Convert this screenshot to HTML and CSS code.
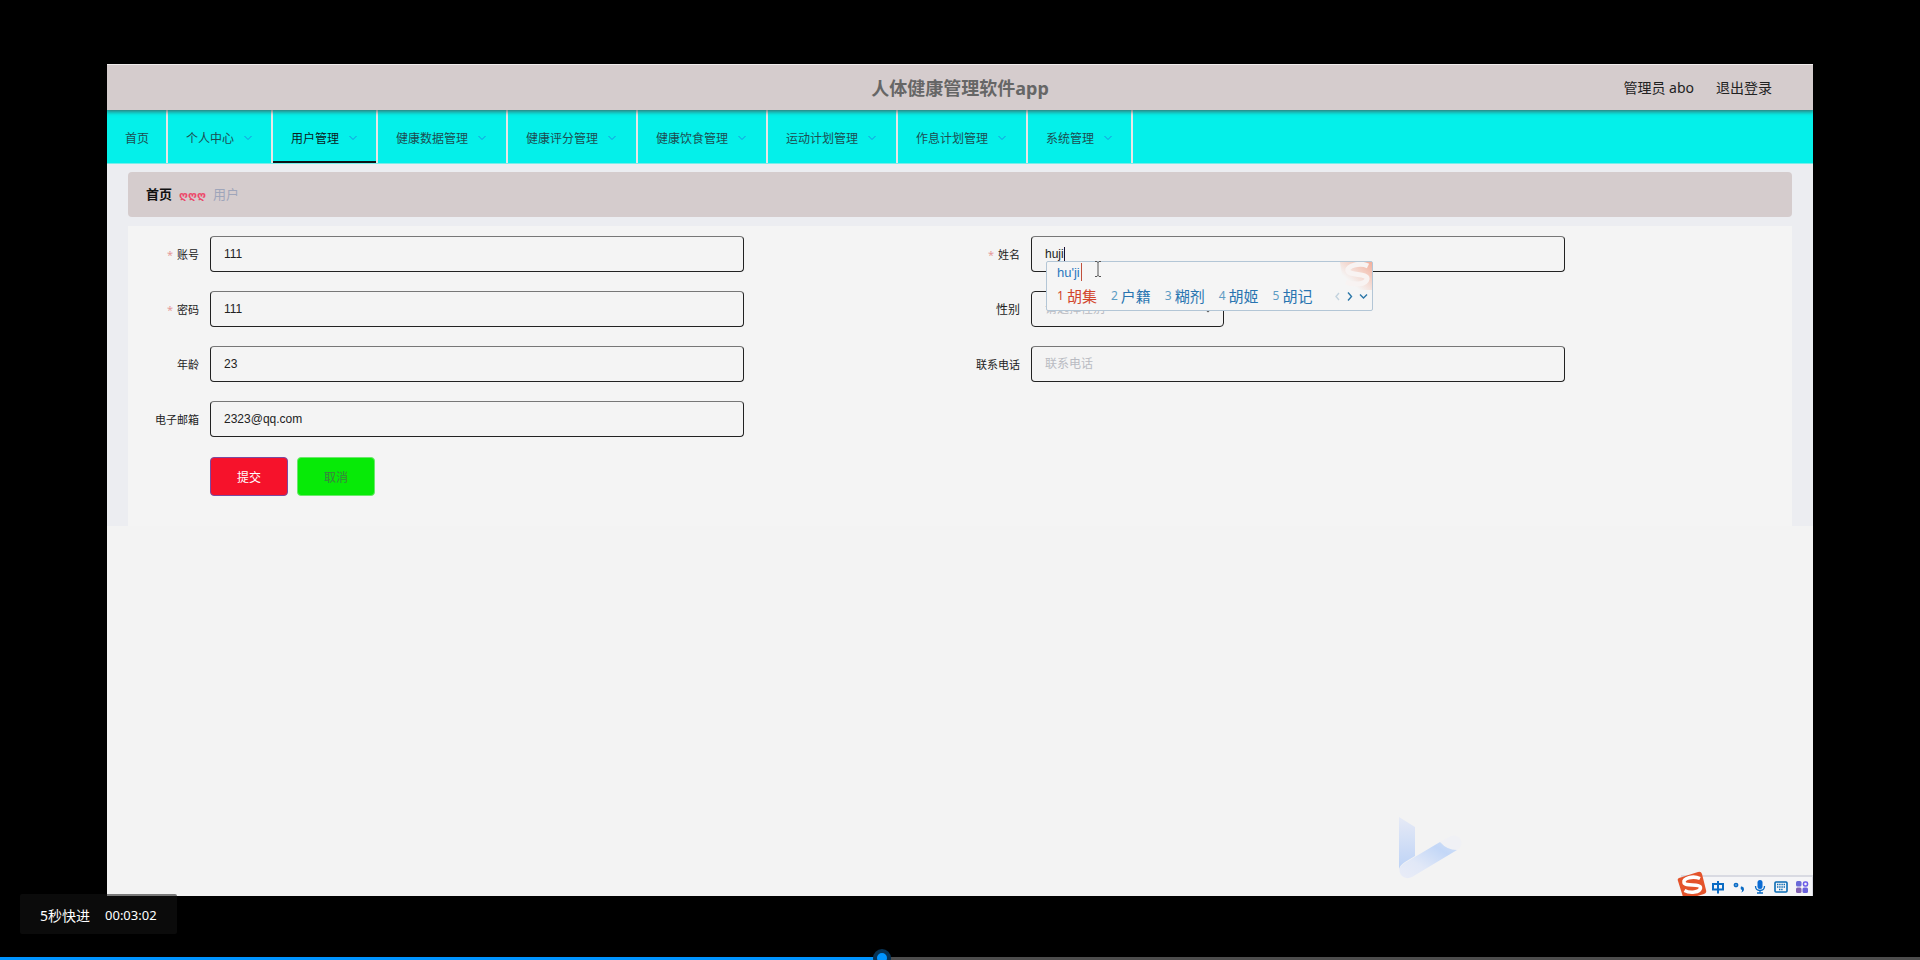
FILE: index.html
```html
<!DOCTYPE html>
<html lang="zh-CN">
<head>
<meta charset="utf-8">
<title>人体健康管理软件app</title>
<link rel="stylesheet" href="styles.css">
</head>
<body>
<div class="player">
  <div class="screen">
    <header class="header">
      <h1 class="title">人体健康管理软件app</h1>
      <div class="account">
        <span>管理员 abo</span>
        <a href="#">退出登录</a>
      </div>
    </header>
    <nav class="nav">
      <a class="nav-item nav-home" href="#">首页</a>
      <a class="nav-item nav-short" href="#">个人中心<svg class="chev" viewBox="0 0 8 6"><path d="M.5 1 4 4.500 7.500 1"/></svg></a>
      <a class="nav-item nav-short active" href="#">用户管理<svg class="chev" viewBox="0 0 8 6"><path d="M.5 1 4 4.500 7.500 1"/></svg></a>
      <a class="nav-item" href="#">健康数据管理<svg class="chev" viewBox="0 0 8 6"><path d="M.5 1 4 4.500 7.500 1"/></svg></a>
      <a class="nav-item" href="#">健康评分管理<svg class="chev" viewBox="0 0 8 6"><path d="M.5 1 4 4.500 7.500 1"/></svg></a>
      <a class="nav-item" href="#">健康饮食管理<svg class="chev" viewBox="0 0 8 6"><path d="M.5 1 4 4.500 7.500 1"/></svg></a>
      <a class="nav-item" href="#">运动计划管理<svg class="chev" viewBox="0 0 8 6"><path d="M.5 1 4 4.500 7.500 1"/></svg></a>
      <a class="nav-item" href="#">作息计划管理<svg class="chev" viewBox="0 0 8 6"><path d="M.5 1 4 4.500 7.500 1"/></svg></a>
      <a class="nav-item nav-short" href="#">系统管理<svg class="chev" viewBox="0 0 8 6"><path d="M.5 1 4 4.500 7.500 1"/></svg></a>
    </nav>
    <main class="content">
      <div class="crumbs">
        <a class="crumb-home" href="#">首页</a>
        <span class="crumb-sep">ღღღ</span>
        <span class="crumb-here">用户</span>
      </div>
      <form class="panel">
        <div class="fields">
          <div class="field">
            <label class="label" for="account"><span class="star">*</span>账号</label>
            <div class="control"><input class="input" id="account" type="text" value="111"></div>
          </div>
          <div class="field">
            <label class="label" for="name"><span class="star">*</span>姓名</label>
            <div class="control">
              <input class="input" id="name" type="text" value="huji">
              <span class="caret"></span>
              <div class="ime">
                <svg class="ime-mark" viewBox="0 0 36 28">
                  <defs><linearGradient id="fade" x1="0" y1="1" x2="1" y2="0"><stop offset=".3" stop-color="#f3b5a2" stop-opacity="0"/><stop offset="1" stop-color="#f2ae9a"/></linearGradient></defs>
                  <path d="M4 0H36V28H8Z" fill="url(#fade)"/>
                  <path d="M32 4C24 0 10 4 12 9C14 14 32 11 31 17C30 23 17 23 10 20" fill="none" stroke="#f8f3f2" stroke-width="5"/>
                </svg>
                <div class="ime-typed">hu'ji</div>
                <div class="ime-row">
                  <span class="cand first"><i>1</i>胡集</span>
                  <span class="cand"><i>2</i>户籍</span>
                  <span class="cand"><i>3</i>糊剂</span>
                  <span class="cand"><i>4</i>胡姬</span>
                  <span class="cand"><i>5</i>胡记</span>
                  <svg class="ime-arrows" viewBox="0 0 34 10"><path d="M5 2 2 5.500 5 9" stroke="#c3d3de"/><path d="M14 1.500 17.500 5.500 14 9.500M26 3.500 29.500 7 33 3.500" stroke="#2c77a8"/></svg>
                </div>
              </div>
              <svg class="ibeam" viewBox="0 0 8 16"><path d="M1 .500H3L4 1.500 5 .500H7M4 1V15M1 15.500H3L4 14.500 5 15.500H7"/></svg>
            </div>
          </div>
          <div class="field">
            <label class="label" for="password"><span class="star">*</span>密码</label>
            <div class="control"><input class="input" id="password" type="text" value="111"></div>
          </div>
          <div class="field">
            <label class="label label-large" for="gender">性别</label>
            <div class="control">
              <div class="select-box">
                <select class="input select" id="gender"><option>请选择性别</option></select>
                <svg class="select-chev" viewBox="0 0 8 6"><path d="M.5 1 4 4.500 7.500 1"/></svg>
              </div>
            </div>
          </div>
          <div class="field">
            <label class="label" for="age">年龄</label>
            <div class="control"><input class="input" id="age" type="text" value="23"></div>
          </div>
          <div class="field">
            <label class="label" for="phone">联系电话</label>
            <div class="control"><input class="input" id="phone" type="text" placeholder="联系电话"></div>
          </div>
          <div class="field">
            <label class="label" for="email">电子邮箱</label>
            <div class="control"><input class="input" id="email" type="text" value="2323@qq.com"></div>
          </div>
        </div>
        <div class="actions">
          <button class="btn submit" type="button">提交</button>
          <button class="btn cancel" type="button">取消</button>
        </div>
      </form>
    </main>
    <svg class="bird" viewBox="0 0 68 70">
      <defs>
        <linearGradient id="wing" x1="0" y1="0" x2="0" y2="1"><stop offset="0" stop-color="#e6eaf6"/><stop offset="1" stop-color="#bcd2f6"/></linearGradient>
        <linearGradient id="body" x1="0" y1="1" x2="1" y2="0"><stop offset="0" stop-color="#e9ecf7"/><stop offset=".35" stop-color="#e1e8f7"/><stop offset=".75" stop-color="#c3d7f7"/><stop offset="1" stop-color="#d0dff7"/></linearGradient>
      </defs>
      <path d="M2 5 18 15V44L8 50Q2 54 2 58Z" fill="url(#wing)"/>
      <path d="M43 30 54 24Q60 22 64 28Q66 34 60 38Q52 38 43 30Z" fill="#f0f1f5"/>
      <path d="M43 30Q50 38 60 38L15 65Q8 68 4 63Q0 57 6 52Z" fill="url(#body)"/>
    </svg>
    <div class="tray">
      <svg class="tray-logo" viewBox="0 0 30 25"><path d="M2 7 21 1Q24 0 25 3L29 19Q30 22 27 23L10 28Q7 29 6 26L1 10Q0 8 2 7Z" fill="#e4532b"/><path d="M23 7.500C16 4.500 6 7 7 11.500C8 16 24 12 23.500 17C23 21.500 13 22.500 7.500 19.500" fill="none" stroke="#fff" stroke-width="3.500"/></svg>
      <svg class="tray-icon" viewBox="0 0 14 14" fill="none" stroke="#0a6bc4" stroke-width="2"><path d="M2 4H12V9.500H2ZM7 1V13.500"/></svg>
      <svg class="tray-icon" viewBox="0 0 14 14"><circle cx="4" cy="5" r="1.700" fill="#5a9cdc" stroke="#0a6bc4" stroke-width="1.300"/><path d="M9 6.500Q12 6 12 9Q12 11.500 9 12.500Q10.500 11 10 10Q8 9.500 9 6.500Z" fill="#0a6bc4"/></svg>
      <svg class="tray-icon" viewBox="0 0 14 14"><rect x="4.500" y="0" width="5" height="9" rx="2.500" fill="#0a6bd4"/><path d="M2.500 6Q2.500 10.500 7 10.500T11.500 6M7 10.500V13M4 13H10" fill="none" stroke="#0a6bc4" stroke-width="1.300"/></svg>
      <svg class="tray-icon" viewBox="0 0 14 14" fill="none" stroke="#0a6bb4"><rect x="1" y="2" width="12" height="10" rx="1" stroke-width="1.600"/><path d="M3 4.500H11M3 7H11M5 9.500H9" stroke-width="1.400" stroke-dasharray="1.400 .8"/></svg>
      <svg class="tray-icon" viewBox="0 0 14 14"><rect x="1" y="1" width="5.500" height="5.500" rx="1.500" fill="#6a6ad8"/><rect x="8.500" y="2" width="4" height="4" rx="1.500" fill="none" stroke="#6a5ae8" stroke-width="1.600"/><rect x="1" y="7.500" width="5.500" height="5.500" rx="1.500" fill="#8262b4"/><rect x="7.500" y="7.500" width="5.500" height="5.500" rx="1.500" fill="#6a62dc"/></svg>
    </div>
  </div>
  <div class="toast"><span>5秒快进</span><time>00:03:02</time></div>
  <input class="progress" type="range" min="0" max="1000" value="459" aria-label="播放进度">
</div>
</body>
</html>
```
FILE: styles.css
```css
* { box-sizing: border-box; }
body {
  margin: 0;
  background: #000;
  color: #222;
  font-family: "Noto Sans", "Noto Sans CJK SC", sans-serif;
  font-size: 13px;
}
a { color: inherit; text-decoration: none; }
.player {
  position: relative;
  display: flex;
  min-height: 100vh;
  padding: 64px 107px;
  overflow: hidden;
}
.screen {
  position: relative;
  flex: 1;
  display: flex;
  flex-direction: column;
  background: #f3f3f3;
  overflow: hidden;
}
.header {
  position: relative;
  z-index: 1;
  display: grid;
  grid-template-columns: 1fr auto 1fr;
  align-items: center;
  height: 46px;
  padding: 0 41px 0;
  border-top: 1px solid #f0ecec;
  background: #d5cccd;
  box-shadow: 0 1px 4px 1px rgba(70, 70, 70, .7);
}
.title {
  grid-column: 2;
  margin: 0;
  color: #666;
  font-size: 18px;
  line-height: 26px;
}
.account {
  display: flex;
  justify-content: flex-end;
  gap: 22px;
  font-size: 14px;
  line-height: 20px;
}
.nav {
  display: flex;
  height: 54px;
  background: #04f0ea;
  border-bottom: 1px solid #7aeeea;
}
.nav-item {
  display: flex;
  align-items: center;
  gap: 9px;
  width: 130px;
  padding-left: 18px;
  padding-top: 2px;
  border-right: 2px solid #e8e6e6;
  color: #1d4e52;
  font-size: 12px;
  white-space: nowrap;
}
.nav-home { width: 61px; }
.nav-short { width: 105px; }
.active {
  color: #0b2022;
  box-shadow: inset 0 -2px #0b1416;
}
.chev { width: 8px; height: 6px; margin-left: 1px; }
.chev path, .select-chev path { fill: none; stroke: #1a90e0; }
.select-chev path { stroke: #555; stroke-width: 1.5; }
.content {
  padding: 8px 21px 0;
  background: #ecedf1;
}
.crumbs {
  display: flex;
  align-items: center;
  gap: 7px;
  height: 45px;
  padding: 0 18px 2px;
  margin-bottom: 9px;
  border-radius: 4px;
  background: #d5cccd;
}
.crumb-home { color: #111; font-weight: 600; }
.crumb-sep { padding-top: 4px; color: #ec4a6c; font-family: "DejaVu Sans", sans-serif; font-size: 11px; font-weight: 700; }
.crumb-here { color: #9fa5ba; }
.panel {
  padding: 10px 22px 30px 0;
  background: #f4f4f4;
}
.fields {
  display: grid;
  grid-template-columns: 1fr 1fr;
  row-gap: 19px;
}
.field { display: flex; align-items: center; }
.label {
  width: 82px;
  padding-right: 11px;
  font-size: 11px;
  text-align: right;
}
.label-large { font-size: 12px; }
.star { margin-right: 4px; color: #e59a9a; }
.control { position: relative; width: 65%; }
.input {
  display: block;
  width: 100%;
  height: 36px;
  padding: 0 13px;
  border: 1px solid #222;
  border-top-color: #777;
  border-radius: 4px;
  background: #f4f4f4;
  color: #222;
  font-family: "Liberation Sans", "Noto Sans CJK SC", sans-serif;
  font-size: 12px;
}
.input::placeholder { color: #b9bbc2; }
.select-box { position: relative; width: 193px; }
.select { appearance: none; border-color: #222; color: #b9bbc2; }
.select-chev { position: absolute; top: 16px; right: 12px; width: 8px; height: 6px; }
.caret { position: absolute; left: 33px; top: 11px; width: 1px; height: 15px; background: #1a1030; }
.ime {
  position: absolute;
  z-index: 2;
  left: 15px;
  top: 25px;
  width: 327px;
  height: 50px;
  padding: 1px 4px 0 10px;
  border: 1px solid #b3c6d6;
  border-radius: 2px;
  background: #f5f5f5;
}
.ime-mark { position: absolute; top: 0; right: 0; width: 36px; height: 28px; }
.ime-typed {
  width: 25px;
  height: 18px;
  border-right: 1px solid #c0503c;
  color: #2a78bf;
  font-family: "Liberation Sans", sans-serif;
  font-size: 13px;
  line-height: 20px;
  white-space: nowrap;
}
.ime-row { display: flex; align-items: center; gap: 14px; height: 29px; }
.cand { display: flex; align-items: center; gap: 3px; color: #2874b0; font-size: 15px; line-height: 24px; white-space: nowrap; }
.cand i { color: #5d9cc4; font-size: 12px; font-style: normal; }
.first, .first i { color: #d2452c; }
.ime-arrows { width: 34px; height: 10px; margin-left: auto; fill: none; stroke-width: 1.4; }
.ibeam { position: absolute; z-index: 3; left: 63px; top: 25px; width: 8px; height: 16px; fill: none; stroke: #555; }
.actions {
  display: flex;
  gap: 9px;
  margin: 20px 0 0 82px;
}
.btn {
  width: 78px;
  height: 39px;
  border: 1px solid #7b4aa0;
  border-radius: 4px;
  font-family: inherit;
  font-size: 12px;
}
.submit { background: #f6122b; color: #fff; }
.cancel { background: #07ea07; border-color: #6be86b; color: #3d8040; }
.bird { position: absolute; right: 348px; bottom: 14px; width: 68px; height: 70px; }
.tray {
  position: absolute;
  right: 0;
  bottom: 0;
  display: flex;
  align-items: center;
  gap: 7px;
  height: 21px;
  padding: 0 3px 0 30px;
  border-top: 2px solid #d9dae2;
  border-right: 1px solid #d9dae2;
  background: #f5f5f7;
}
.tray-logo { position: absolute; left: -4px; bottom: 0; width: 30px; height: 25px; }
.tray-icon { width: 14px; height: 14px; }
.toast {
  position: absolute;
  left: 20px;
  bottom: 26px;
  display: flex;
  align-items: center;
  gap: 15px;
  height: 40px;
  padding: 2px 20px 0;
  border-radius: 2px;
  background: rgba(20, 20, 20, .55);
  color: #fff;
  font-size: 14px;
}
.toast time { font-size: 13px; }
.progress {
  position: absolute;
  left: 0;
  bottom: -7px;
  width: 100%;
  height: 18px;
  margin: 0;
  appearance: none;
  background: linear-gradient(to right, #0094ff 46%, #4d4d4d 46%) 0 8px / 100% 10px no-repeat;
}
.progress::-webkit-slider-thumb {
  appearance: none;
  width: 18px;
  height: 18px;
  border: 4px solid #073355;
  border-radius: 50%;
  background: #0094ff;
}
```
